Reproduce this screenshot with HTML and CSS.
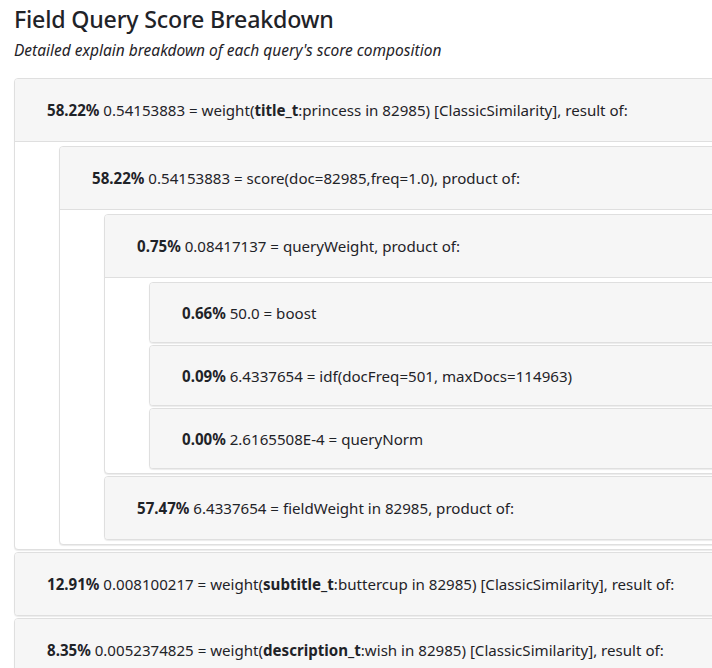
FILE: index.html
```html
<!DOCTYPE html>
<html lang="en">
<head>
<meta charset="utf-8">
<title>Field Query Score Breakdown</title>
<link rel="stylesheet" href="styles.css">
</head>
<body>
<div class="page">
  <h3 class="title">Field Query Score Breakdown</h3>
  <p class="subtitle">Detailed explain breakdown of each query's score composition</p>

  <div class="panel has-children">
    <div class="heading"><span><b>58.22%</b> 0.54153883 = weight(<b>title_t</b>:princess in 82985) [ClassicSimilarity], result of:</span></div>
    <div class="body">
      <div class="panel has-children">
        <div class="heading"><span><b>58.22%</b> 0.54153883 = score(doc=82985,freq=1.0), product of:</span></div>
        <div class="body">
          <div class="panel has-children">
            <div class="heading"><span><b>0.75%</b> 0.08417137 = queryWeight, product of:</span></div>
            <div class="body">
              <div class="panel leaf">
                <div class="heading"><span><b>0.66%</b> 50.0 = boost</span></div>
              </div>
              <div class="panel leaf">
                <div class="heading"><span><b>0.09%</b> 6.4337654 = idf(docFreq=501, maxDocs=114963)</span></div>
              </div>
              <div class="panel leaf">
                <div class="heading"><span><b>0.00%</b> 2.6165508E-4 = queryNorm</span></div>
              </div>
            </div>
          </div>
          <div class="panel">
            <div class="heading"><span><b>57.47%</b> 6.4337654 = fieldWeight in 82985, product of:</span></div>
          </div>
        </div>
      </div>
    </div>
  </div>

  <div class="panel">
    <div class="heading"><span><b>12.91%</b> 0.008100217 = weight(<b>subtitle_t</b>:buttercup in 82985) [ClassicSimilarity], result of:</span></div>
  </div>
  <div class="panel">
    <div class="heading"><span><b>8.35%</b> 0.0052374825 = weight(<b>description_t</b>:wish in 82985) [ClassicSimilarity], result of:</span></div>
  </div>
</div>
</body>
</html>
```

FILE: styles.css
```css
html, body {
  margin: 0;
  padding: 0;
  overflow: hidden;
  background: #fff;
}

body {
  font-family: "Noto Sans", "Open Sans", sans-serif;
  color: #1f2328;
  font-size: 15.1px;
}

.page {
  width: 900px;
  padding: 0 0 0 14px;
}

.title {
  margin: 0;
  padding-top: 4px;
  font-size: 23.2px;
  font-weight: 500;
  line-height: 30px;
  letter-spacing: -0.2px;
}

.subtitle {
  margin: 6px 0 0 0;
  font-style: italic;
  font-size: 15.5px;
  line-height: 21px;
}

.subtitle + .panel {
  margin-top: 17px;
}

.panel {
  border: 1px solid #dfdfdf;
  border-radius: 4px;
  margin-bottom: 2px;
  background: #fff;
  box-shadow: 0 1px 1px rgba(0, 0, 0, 0.08);
}

.heading {
  height: 62px;
  display: flex;
  align-items: center;
  padding-left: 32px;
  background: #f6f6f6;
  border-radius: 3px;
  white-space: nowrap;
}

.has-children > .heading {
  border-bottom: 1px solid #dfdfdf;
  border-radius: 3px 3px 0 0;
}

.leaf > .heading {
  height: 59px;
}

.body {
  padding: 4px 0 2px 44px;
}

b {
  font-weight: 700;
}
```
